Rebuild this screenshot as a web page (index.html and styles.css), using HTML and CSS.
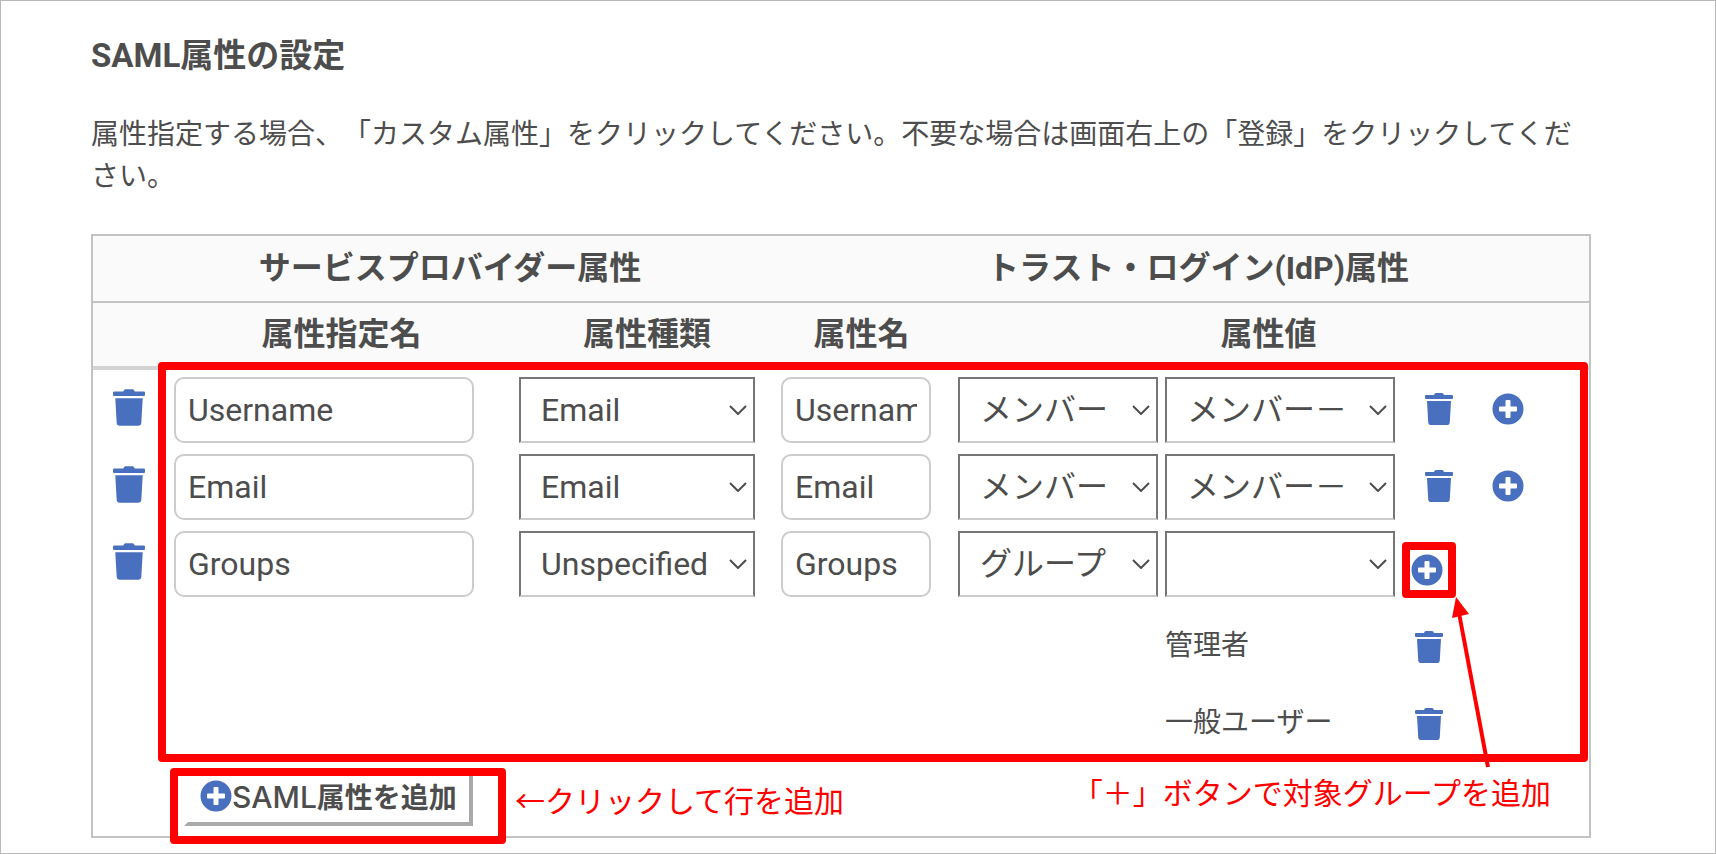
FILE: index.html
```html
<!DOCTYPE html>
<html lang="ja">
<head>
<meta charset="utf-8">
<meta name="viewport" content="width=device-width, initial-scale=1">
<title>SAML属性の設定</title>
<link rel="stylesheet" href="styles.css">
</head>
<body>
<svg class="sprite" aria-hidden="true">
  <symbol id="trash" viewBox="0 0 28 32">
    <path d="M1 2h8l.6-1.2Q10 0 11 0h6q1 0 1.400.8L19 2h8q1 0 1 1v2q0 1-1 1H1Q0 6 0 5V3q0-1 1-1zM2 8h24l-1.200 21.200Q24.600 32 22 32H6Q3.400 32 3.200 29.200z"/>
  </symbol>
  <symbol id="plus" viewBox="0 0 32 32">
    <path fill-rule="evenodd" d="M16 .5a15.500 15.500 0 1 0 0 31a15.500 15.500 0 1 0 0-31zM14.500 7h3q1 0 1 1v5.500H24q1 0 1 1v3q0 1-1 1h-5.500V24q0 1-1 1h-3q-1 0-1-1v-5.500H8q-1 0-1-1v-3q0-1 1-1h5.500V8q0-1 1-1z"/>
  </symbol>
</svg>
<main class="page">
  <h1 class="title">SAML属性の設定</h1>
  <p class="lead">属性指定する場合、「カスタム属性」をクリックしてください。不要な場合は画面右上の「登録」をクリックしてください。</p>
  <div class="panel">
    <table class="attrs">
      <colgroup>
        <col class="col-del"><col class="col-name"><col class="col-type"><col class="col-attr"><col>
      </colgroup>
      <thead>
        <tr class="head-group">
          <th colspan="3">サービスプロバイダー属性</th>
          <th colspan="2">トラスト・ログイン(IdP)属性</th>
        </tr>
        <tr class="head-cols">
          <th></th>
          <th>属性指定名</th>
          <th>属性種類</th>
          <th>属性名</th>
          <th>属性値</th>
        </tr>
      </thead>
      <tbody>
        <tr>
          <td class="cell-del"><button class="icon-btn" type="button" aria-label="行を削除"><svg class="trash-lg"><use href="#trash"/></svg></button></td>
          <td class="cell-name"><input class="field" type="text" value="Username" aria-label="属性指定名"></td>
          <td><select class="select type" aria-label="属性種類"><option>Email</option></select></td>
          <td class="cell-attr"><input class="field" type="text" value="Username" aria-label="属性名"></td>
          <td class="cell-value">
            <div class="values">
              <select class="select kind" aria-label="属性値の種別"><option>メンバー</option></select>
              <select class="select value" aria-label="属性値"><option>メンバー－</option></select>
              <button class="icon-btn del-value" type="button" aria-label="属性値を削除"><svg class="trash"><use href="#trash"/></svg></button>
              <button class="icon-btn add-value" type="button" aria-label="属性値を追加"><svg class="plus"><use href="#plus"/></svg></button>
            </div>
          </td>
        </tr>
        <tr>
          <td class="cell-del"><button class="icon-btn" type="button" aria-label="行を削除"><svg class="trash-lg"><use href="#trash"/></svg></button></td>
          <td class="cell-name"><input class="field" type="text" value="Email" aria-label="属性指定名"></td>
          <td><select class="select type" aria-label="属性種類"><option>Email</option></select></td>
          <td class="cell-attr"><input class="field" type="text" value="Email" aria-label="属性名"></td>
          <td class="cell-value">
            <div class="values">
              <select class="select kind" aria-label="属性値の種別"><option>メンバー</option></select>
              <select class="select value" aria-label="属性値"><option>メンバー－</option></select>
              <button class="icon-btn del-value" type="button" aria-label="属性値を削除"><svg class="trash"><use href="#trash"/></svg></button>
              <button class="icon-btn add-value" type="button" aria-label="属性値を追加"><svg class="plus"><use href="#plus"/></svg></button>
            </div>
          </td>
        </tr>
        <tr>
          <td class="cell-del"><button class="icon-btn" type="button" aria-label="行を削除"><svg class="trash-lg"><use href="#trash"/></svg></button></td>
          <td class="cell-name"><input class="field" type="text" value="Groups" aria-label="属性指定名"></td>
          <td><select class="select type" aria-label="属性種類"><option>Unspecified</option></select></td>
          <td class="cell-attr"><input class="field" type="text" value="Groups" aria-label="属性名"></td>
          <td class="cell-value">
            <div class="values">
              <select class="select kind" aria-label="属性値の種別"><option>グループ</option></select>
              <select class="select value" aria-label="対象グループ"><option></option></select>
              <button class="icon-btn add-group" type="button" aria-label="対象グループを追加"><svg class="plus"><use href="#plus"/></svg><span class="mark mark-plus"></span></button>
            </div>
            <ul class="groups">
              <li class="group"><span class="group-name">管理者</span><button class="icon-btn" type="button" aria-label="管理者を削除"><svg class="trash"><use href="#trash"/></svg></button></li>
              <li class="group"><span class="group-name">一般ユーザー</span><button class="icon-btn" type="button" aria-label="一般ユーザーを削除"><svg class="trash"><use href="#trash"/></svg></button></li>
            </ul>
          </td>
        </tr>
      </tbody>
      <tfoot>
        <tr>
          <td></td>
          <td class="cell-add" colspan="4"><button class="add-row" type="button"><svg class="plus"><use href="#plus"/></svg><span><span class="latin">SAML</span>属性を追加</span></button></td>
        </tr>
      </tfoot>
    </table>
    <span class="mark mark-rows"></span>
    <span class="mark mark-add"></span>
    <svg class="arrow" viewBox="0 0 40 174" aria-hidden="true"><path d="M7 16L36 170" stroke="#f00" stroke-width="4"/><path d="M4 0L17 17L0 21z" fill="#f00"/></svg>
    <span class="note note-add">←クリックして行を追加</span>
    <span class="note note-group">「＋」ボタンで対象グループを追加</span>
  </div>
</main>
</body>
</html>
```
FILE: styles.css
```css
* { box-sizing: border-box; }

body {
  margin: 0;
  background: #fff;
  color: #4d4d4d;
  font-family: Roboto, "Noto Sans CJK JP", sans-serif;
  font-size: 32px;
  text-spacing-trim: space-all;
}

.sprite { position: absolute; width: 0; height: 0; }

.page {
  min-height: 100vh;
  padding: 31px 124px 15px 90px;
  border: 1px solid #b9b9b9;
}

.title {
  margin: 0 0 34px;
  font-size: 33px;
  line-height: 48px;
  font-weight: 700;
}

.lead {
  margin: 0 0 36px;
  font-size: 28px;
  line-height: 42px;
}

.panel { position: relative; }

.attrs {
  width: 100%;
  border: 2px solid #c3c3c3;
  border-spacing: 0;
  table-layout: fixed;
}

.col-del { width: 71px; }
.col-name { width: 355px; }
.col-type { width: 256px; }
.col-attr { width: 173px; }

th {
  padding: 0 0 2px;
  background: #fafafa;
  font-weight: 700;
  line-height: 48px;
}

.head-group th {
  height: 67px;
  padding-left: 32px;
  border-bottom: 2px solid #c3c3c3;
}

.head-cols th {
  height: 67px;
  border-bottom: 4px solid #d3d3d3;
}

td { padding: 7px 0 4px; vertical-align: top; }

td.cell-del { padding: 19px 0 0 20px; }
td.cell-name { padding-left: 10px; }
td.cell-attr { padding-left: 6px; }
td.cell-value { padding-left: 10px; }

.field,
.select {
  display: block;
  height: 66px;
  margin: 0;
  color: inherit;
  font: inherit;
  line-height: 48px;
  outline: 0;
}

.field {
  width: 300px;
  padding: 0 12px;
  border: 2px solid #ccc;
  border-radius: 10px;
  background: #fff;
}

.cell-attr .field { width: 150px; }

.select {
  appearance: none;
  padding: 0 28px 0 20px;
  border: 2px solid #767676;
  border-bottom-color: #ccc;
  border-radius: 0;
  background: #fff url("data:image/svg+xml,%3Csvg xmlns='http://www.w3.org/2000/svg' width='18' height='10'%3E%3Cpath d='M1 1l8 8 8-8' fill='none' stroke='%234d4d4d' stroke-width='2'/%3E%3C/svg%3E") no-repeat right 6px center;
}

.type { width: 236px; }
.kind { width: 200px; }
.value { width: 230px; margin-left: 7px; }

.values { display: flex; align-items: center; }

.icon-btn {
  position: relative;
  display: block;
  padding: 0;
  border: 0;
  background: none;
  color: #4970bf;
}

.icon-btn svg,
.add-row svg { display: block; fill: #4970bf; }

.trash { width: 28px; height: 32px; }
.trash-lg { width: 32px; height: 37px; }
.plus { width: 32px; height: 32px; }

.del-value { margin: 0 0 2px 30px; }
.add-value { margin: 0 0 2px 39px; }
.add-group { margin: 12px 0 0 16px; }

.groups { margin: 8px 0 0; padding: 0; list-style: none; }

.group {
  display: flex;
  align-items: center;
  height: 77px;
  padding: 4px 0 0 207px;
  font-size: 28px;
  line-height: 42px;
}

.group-name { width: 250px; }
.group .icon-btn { margin-top: 2px; }

td.cell-add { padding: 7px 0 10px 20px; }

.add-row {
  display: flex;
  align-items: center;
  height: 56px;
  padding: 0 12px 4px;
  border: 4px solid transparent;
  border-right-color: #a9a9a9;
  border-bottom-color: #a9a9a9;
  background: #fff;
  color: inherit;
  font: inherit;
  font-size: 28px;
  font-weight: 600;
}

.latin {
  font-family: Inter, sans-serif;
  font-size: 30px;
  font-weight: 500;
}

.mark {
  position: absolute;
  border: 8px solid #f00;
  border-radius: 4px;
  pointer-events: none;
}

.mark-rows { top: 128px; right: 3px; bottom: 76px; left: 67px; }
.mark-add { bottom: -6px; left: 79px; width: 336px; height: 76px; }
.mark-plus { top: -12px; right: -13px; bottom: -12px; left: -9px; }

.arrow {
  position: absolute;
  top: 363px;
  left: 1361px;
  width: 40px;
  height: 174px;
  fill: none;
}

.note {
  position: absolute;
  color: #f00;
  font-size: 30px;
  line-height: 44px;
  white-space: nowrap;
}

.note-add { bottom: 14px; left: 424px; }
.note-group { right: 40px; bottom: 22px; }
```
